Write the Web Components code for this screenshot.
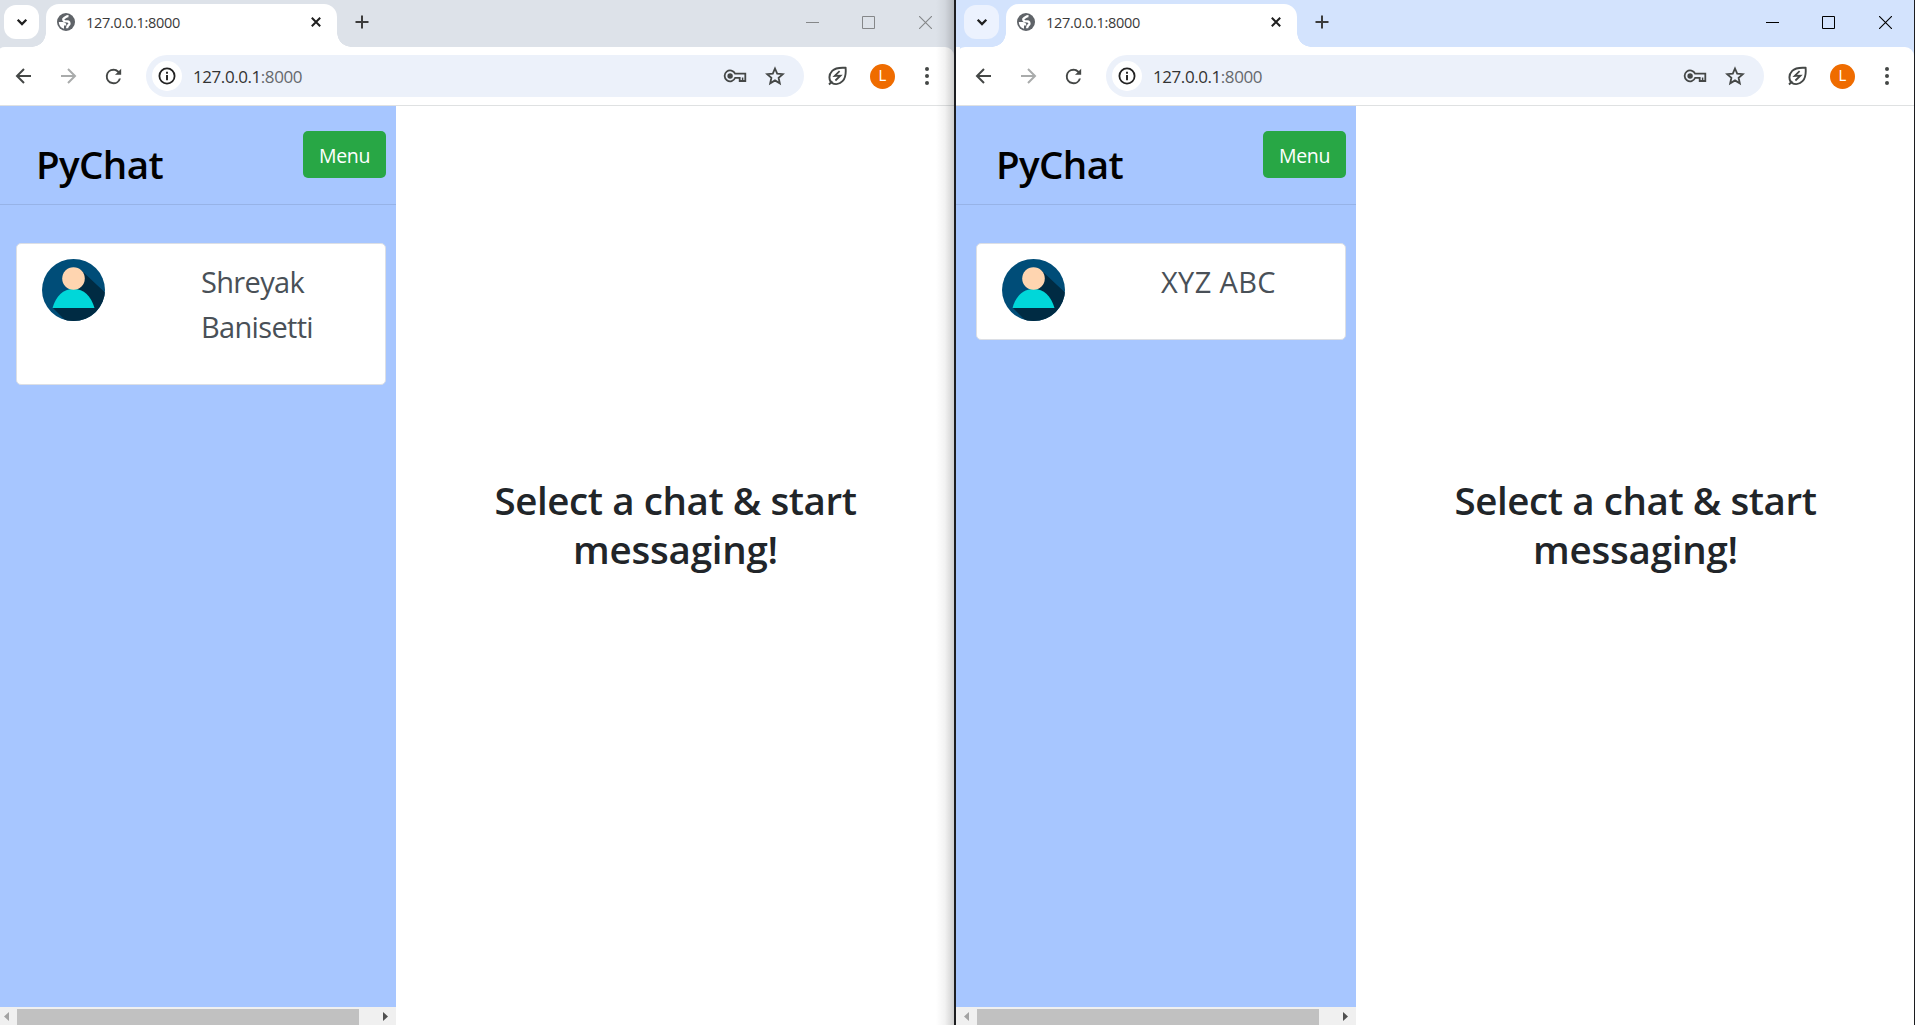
<!DOCTYPE html>
<html lang="en">
<head>
<meta charset="utf-8">
<title>PyChat</title>
<style>
html,body{margin:0;height:100%;overflow:hidden;background:#fff}
body{font-family:"Open Sans","Noto Sans",sans-serif}
</style>
</head>
<body>
<desktop-split>
  <browser-window inactive address="127.0.0.1:8000">
    <chat-page><chat-card>Shreyak<br>Banisetti</chat-card></chat-page>
  </browser-window>
  <browser-window address="127.0.0.1:8000">
    <chat-page><chat-card>XYZ ABC</chat-card></chat-page>
  </browser-window>
</desktop-split>
<script>
const define = (name, html, setup) => customElements.define(name, class extends HTMLElement {
  connectedCallback() {
    if (this.shadowRoot) return;
    const t = document.createElement('template');
    t.innerHTML = typeof html === 'function' ? html(this) : html;
    this.attachShadow({mode: 'open'}).append(t.content.cloneNode(true));
    if (setup) setup(this);
  }
});

const icons = {
  chevron: [12, 12, '<path d="M1.700 3.700 6 8l4.300-4.300" fill="none" stroke="#1f1f1f" stroke-width="2.300"/>'],
  globe: [18, 18, '<circle cx="9" cy="9" r="9" fill="#5f6368"/><path fill="#fff" d="M1.800 9h3.800c2.600 0 3.800 1.200 3.700 3.600H7v3.200A7.200 7.200 0 0 1 1.800 9z"/><path d="M11.500 3.100C9 3 8.800 4.600 7 5.200 5.600 6 6.200 8 8 8.100c3 .1 4.600.5 4.500 2.500-.1 1.700-2.300 1.200-2.400 4.600" fill="none" stroke="#fff" stroke-width="2.300"/>'],
  x: [12, 12, '<path d="m1.800 1.800 8.400 8.400m0-8.400-8.400 8.400" stroke="#1f1f1f" stroke-width="2"/>'],
  plus: [14, 14, '<path d="M7 .5v13M.5 7h13" stroke="#3c3c3c" stroke-width="2"/>'],
  back: [17, 16, '<path d="M16 8H2.200M9 1 2 8l7 7" fill="none" stroke="#444746" stroke-width="2"/>'],
  forward: [17, 16, '<path d="M1 8h13.800M8 1l7 7-7 7" fill="none" stroke="#a9abab" stroke-width="2"/>'],
  reload: [23, 23, '<path transform="scale(.9583)" fill="#444746" d="M17.650 6.350A7.960 7.960 0 0 0 12 4a8 8 0 1 0 7.730 10h-2.080A6 6 0 1 1 12 6c1.660 0 3.140.69 4.220 1.780L13.500 10.200H20V4z"/>'],
  info: [18, 18, '<circle cx="9" cy="9" r="7.600" fill="none" stroke="#222" stroke-width="1.800"/><path d="M9 8v5.200M9 4.700v2" stroke="#222" stroke-width="1.900"/>'],
  key: [24, 14, '<path d="M12.100 4.700H22.300V12H16.700V8.800H12.200A5.450 5.450 0 1 1 12.100 4.700Z" fill="none" stroke="#444746" stroke-width="1.800"/><path d="M19.600 8.500V12" stroke="#444746" stroke-width="1.500"/><circle cx="7.100" cy="7" r="2.700" fill="#444746"/>'],
  star: [20, 20, '<path d="m10 2.500 2.200 5.100 5.600.5-4.200 3.700 1.200 5.500-4.800-2.900-4.800 2.900 1.200-5.500L2.200 8.100l5.600-.5z" fill="none" stroke="#444746" stroke-width="1.800"/>'],
  leaf: [20, 20, '<path d="M2.600 15.800C.9 12.300 1.400 7.800 4.200 4.900 7.200 1.800 11.900 1.400 17.600 1.800c.5 5.600 0 10.300-3.100 13.400-2.900 3-7.300 3.500-10.700 1.600M1 18.500l3.300-3.200" fill="none" stroke="#444746" stroke-width="1.900"/><path d="M11.600 5.200 6.700 9.900l5.700-.2-5 4.800" fill="none" stroke="#444746" stroke-width="1.800"/>'],
  dots: [4, 18, '<g fill="#444746"><circle cx="2" cy="2" r="2"/><circle cx="2" cy="9" r="2"/><circle cx="2" cy="16" r="2"/></g>'],
  min: [13, 13, '<path d="M0 6.500h13" stroke="currentColor"/>'],
  max: [13, 13, '<path d="M.5.5h12v12H.5z" fill="none" stroke="currentColor"/>'],
  close: [13, 13, '<path d="m0 0 13 13M13 0 0 13" stroke="currentColor" stroke-width="1.100"/>'],
  avatar: [63, 62, '<defs><clipPath id="c"><ellipse cx="31.500" cy="31" rx="31.500" ry="31"/></clipPath></defs><g clip-path="url(#c)"><path fill="#004d78" d="M0 0h63v62H0z"/><path fill="#002b43" d="M39 11 70 40V62H24L10.500 48.500 30 30z"/></g><path fill="#00d7d9" d="M10.500 49C14 37 21 30 31.500 30S49 37 52.500 49z"/><circle cx="31.500" cy="19.500" r="11.300" fill="#ffd5b0"/>']
};
define('ui-icon', el => {
  const [w, h, body] = icons[el.getAttribute('name')];
  return `<style>:host{display:block;flex:none;width:${w}px;height:${h}px}svg{display:block}</style><svg width="${w}" height="${h}" viewBox="0 0 ${w} ${h}">${body}</svg>`;
});

/* A line of text whose tracking is adjusted to fill the given width. */
define('fit-text', '<style>:host{display:inline-block;white-space:nowrap}</style><span><slot></slot></span>', el => {
  const span = el.shadowRoot.querySelector('span');
  const target = +el.getAttribute('width');
  const diff = target - span.getBoundingClientRect().width;
  el.style.letterSpacing = diff / el.textContent.length + 'px';
});

define('desktop-split', `<style>
:host{display:flex;box-sizing:border-box;width:1915px;height:1025px;background:#1c1d20;gap:2px;padding-right:1px;overflow:hidden}
</style><slot></slot>`);

define('window-tabs', el => `<style>
:host{display:flex;height:47px;box-sizing:border-box;align-items:flex-start;padding-left:4px;background:var(--frame)}
.search{display:flex;align-items:center;justify-content:center;width:35px;height:34px;margin-top:5px;border-radius:12px;background:var(--chip)}
.tab{position:relative;box-sizing:border-box;display:flex;align-items:center;width:291px;height:43px;margin:4px 0 0 7px;padding:0 15px 7px 11px;border-radius:13px 13px 0 0;background:#fff}
.tab:before,.tab:after{content:"";position:absolute;bottom:0;width:14px;height:14px}
.tab:before{left:-14px;background:radial-gradient(circle at 0 0,transparent 13.500px,#fff 14px)}
.tab:after{right:-14px;background:radial-gradient(circle at 100% 0,transparent 13.500px,#fff 14px)}
fit-text{margin-left:11px;font-size:14.500px;color:#3a3a3a;flex:1;line-height:20px;padding-top:1px}
.plus{margin:15px 0 0 18px}
.controls{display:flex;gap:43px;margin:16px 22px 0 auto;color:var(--control)}
.controls :last-child{margin-left:1px}
</style>
<div class="search"><ui-icon name="chevron"></ui-icon></div>
<div class="tab"><ui-icon name="globe"></ui-icon><fit-text width="94">${el.getAttribute('label')}</fit-text><ui-icon name="x"></ui-icon></div>
<ui-icon class="plus" name="plus"></ui-icon>
<div class="controls"><ui-icon name="min"></ui-icon><ui-icon name="max"></ui-icon><ui-icon name="close"></ui-icon></div>`);

define('window-toolbar', el => `<style>
:host{display:block;background:var(--frame)}
.bar{display:flex;align-items:center;box-sizing:border-box;height:59px;margin-left:-4px;padding:0 25px 0 19px;background:#fff;border-bottom:1px solid #dfe1e2;border-radius:9px 9px 0 0}
.box{display:flex;align-items:center;flex:1;box-sizing:border-box;height:42px;margin:0 24px 0 21px;padding:0 19px 0 6px;border-radius:21px;background:#ecf1fa}
.info{display:flex;align-items:center;justify-content:center;width:30px;height:30px;border-radius:50%;background:#fff;margin-right:11px}
fit-text{flex:1;font-size:17px;line-height:24px;color:#333;padding-top:1px}
.rest{color:#66696d}
.forward{margin-left:28px}.reload{margin-left:25px}
.user{display:flex;align-items:center;justify-content:center;width:25px;height:25px;margin:0 30px 0 22px;border-radius:50%;background:#ef6c00;color:#fff;font:14px Roboto,sans-serif}
.star{margin-left:18px}
</style>
<div class="bar"><ui-icon name="back"></ui-icon><ui-icon class="forward" name="forward"></ui-icon><ui-icon class="reload" name="reload"></ui-icon>
<div class="box"><div class="info"><ui-icon name="info"></ui-icon></div><fit-text width="109">${el.getAttribute('label').replace(/(:\d+)/, '<span class="rest">$1</span>')}</fit-text><ui-icon name="key"></ui-icon><ui-icon class="star" name="star"></ui-icon></div>
<ui-icon name="leaf"></ui-icon><div class="user">L</div><ui-icon name="dots"></ui-icon></div>`);

define('browser-window', el => `<style>
:host{--frame:#d3e3fd;--chip:#ecf2fe;--control:#000;position:relative;display:flex;flex-direction:column;box-sizing:border-box;flex:none;width:958px;height:1025px;background:linear-gradient(var(--frame) 47px,#fff 47px)}
:host([inactive]){--frame:#dde2e9;--chip:#fff;--control:#858789;width:954px}
.inner{display:flex;flex-direction:column;flex:1;margin-left:4px;min-height:0}
.page{display:flex;flex:1;min-height:0;margin-left:-4px}
:host([inactive]) .inner,:host([inactive]) .page{margin-left:0}
:host([inactive])::after{content:"";position:absolute;inset:0 0 0 auto;width:18px;background:linear-gradient(90deg,transparent,rgba(0,0,0,.05) 50%,rgba(0,0,0,.19))}
</style>
<div class="inner"><window-tabs label="${el.getAttribute('address')}"></window-tabs><window-toolbar label="${el.getAttribute('address')}"></window-toolbar><div class="page"><slot></slot></div></div>`);

define('scroll-strip', `<style>
:host{display:flex;align-items:center;height:18px;background:#f0f0f0;flex:none;padding-left:var(--edge)}
svg{display:block;flex:none}.thumb{align-self:flex-end;width:342px;height:16px;background:#c1c1c1;margin:0 24px 0 8px}
.l{margin-left:4px}
</style>
<svg class="l" width="5" height="9"><path d="M5 0v9L0 4.500z" fill="#a3a3a3"/></svg><div class="thumb"></div><svg width="5" height="9"><path d="M0 0v9l5-4.500z" fill="#505050"/></svg>`);

define('chat-page', el => `<style>
:host{--edge:${el.parentElement.hasAttribute('inactive') ? 0 : 4}px;display:flex;width:100%;color:#212529}
aside{display:flex;flex-direction:column;flex:none;width:calc(396px + var(--edge));background:#a7c6ff}
header{display:flex;justify-content:space-between;align-items:flex-start;box-sizing:border-box;height:99px;padding:25px 10px 0 calc(36px + var(--edge));border-bottom:1px solid #97b3e7}
h1{margin:9px 0 0;font-size:38.500px;line-height:48px;font-weight:600;color:#000}
button{width:83px;height:47px;padding:2px 0 0;border:0;border-radius:5px;background:#28a745;color:#fff;font:19.500px/30px "Open Sans","Noto Sans",sans-serif}
.list{flex:1;padding:38px 10px 0 calc(16px + var(--edge))}
main{flex:1;text-align:center;font-size:38.500px;font-weight:600;line-height:48.500px;padding:370px 0 0 1px}
</style>
<aside><header><h1><fit-text width="127">PyChat</fit-text></h1><button><fit-text width="51">Menu</fit-text></button></header>
<div class="list"><slot></slot></div><scroll-strip></scroll-strip></aside>
<main><fit-text width="362">Select a chat &amp; start</fit-text><br><fit-text width="205">messaging!</fit-text></main>`);

define('chat-card', el => {
  const widths = {Shreyak: 103, Banisetti: 112, 'XYZ ABC': 115};
  const names = el.innerHTML.split('<br>');
  return `<style>
:host{display:flex;box-sizing:border-box;height:${names.length > 1 ? 142 : 97}px;padding:15px 25px;background:#fff;border:1px solid #dcdfe5;border-radius:5px;color:#495057;font-size:29px;line-height:45px}
.name{margin-left:96px}
</style><ui-icon name="avatar"></ui-icon><div class="name">${names.map(n => `<fit-text width="${widths[n]}">${n}</fit-text>`).join('<br>')}</div>`;
});
</script>
</body>
</html>
